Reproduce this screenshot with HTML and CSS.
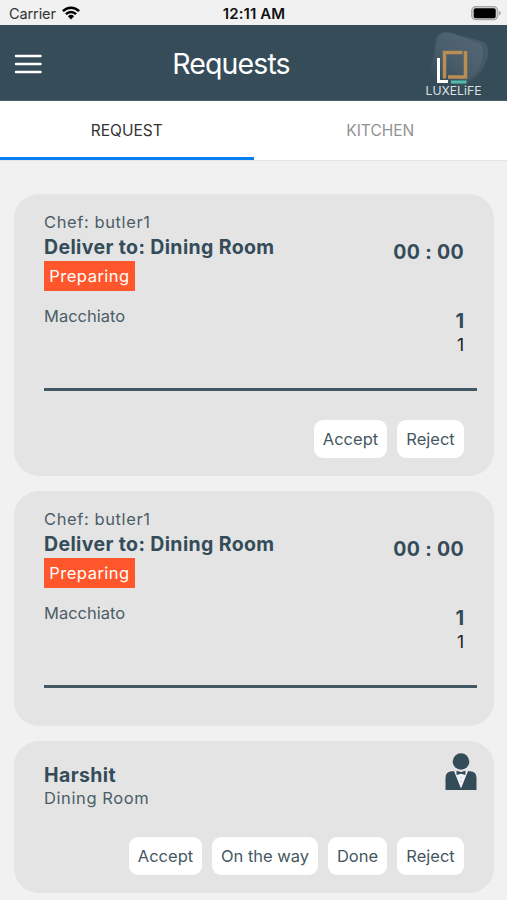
FILE: index.html
```html
<!DOCTYPE html>
<html lang="en">
<head>
<meta charset="utf-8">
<title>Requests</title>
<link rel="stylesheet" href="styles.css">
</head>
<body>
<div class="status">
  <div class="carrier"><span>Carrier</span>
    <svg width="18" height="14" viewBox="0 0 18 14"><g fill="none" stroke="#000" stroke-width="2.5"><path d="M.9 5.1C5.5.5 12.5.5 17.100 5.100"/><path d="M3.900 8.200C6.800 5.300 11.200 5.300 14.100 8.200"/></g><path d="M5.900 10.200Q9 7.500 12.100 10.200L9 13.500Z"/></svg>
  </div>
  <div class="clock">12:11 AM</div>
  <svg class="battery" width="30" height="15" viewBox="0 0 30 15"><rect x=".7" y=".7" width="26" height="13" rx="4" fill="#d4d4d4" stroke="#a5a5a5" stroke-width="1.200"/><rect x="2.700" y="2.200" width="22" height="10" rx="2"/><path d="M28 5v4.500Q29.800 8.800 29.800 7.200T28 5Z" fill="#a5a5a5"/></svg>
</div>
<header class="header">
  <svg class="menu" width="28" height="21" viewBox="0 0 28 21"><path d="M2 2h24.500M2 10h24.500M2 18h24.500" stroke="#fff" stroke-width="2.500" stroke-linecap="round"/></svg>
  <h1>Requests</h1>
  <svg class="logo" width="70" height="70" viewBox="0 0 70 70">
    <defs><linearGradient id="haze" x1="1" y1="0" x2=".2" y2="1"><stop offset="0" stop-color="#586b78"/><stop offset=".6" stop-color="#4b5f6c"/><stop offset="1" stop-color="#364c58"/></linearGradient></defs>
    <path d="M13 9Q17 1 28 4L58 12Q67 15 65 27L61 38Q54 50 39 57L8 49Q6 42 10 29Z" fill="url(#haze)" opacity=".55"/>
    <path d="M15 9Q18 2 28 4L55 14Q62 17 60 27L56 40Q48 50 36 57L12 49Q7 42 11 29Z" fill="url(#haze)" opacity=".8"/>
    <path d="M15.500 29v23.500H25" fill="none" stroke="#fff" stroke-width="3"/>
    <path d="M39.500 23.500H21.500v26M25 48H42.500V22" fill="none" stroke="#ba8d52" stroke-width="3.500"/>
    <path d="M28 53h15.500" stroke="#50bdb0" stroke-width="3"/>
    <text x="2.500" y="66" textLength="56" lengthAdjust="spacingAndGlyphs">LUXELiFE</text>
  </svg>
</header>
<nav class="tabs"><div class="tab active">REQUEST</div><div class="tab">KITCHEN</div></nav>
<main>
  <section class="card first">
    <div class="row">
      <div><p class="chef">Chef: butler1</p><p class="name deliver">Deliver to: Dining Room</p><span class="badge">Preparing</span></div>
      <div class="timer">00 : 00</div>
    </div>
    <div class="row item"><span class="drink">Macchiato</span><div class="counts"><b>1</b><span>1</span></div></div>
    <div class="rule"></div>
    <div class="actions"><button>Accept</button><button class="reject">Reject</button></div>
  </section>
  <section class="card second">
    <div class="row">
      <div><p class="chef">Chef: butler1</p><p class="name deliver">Deliver to: Dining Room</p><span class="badge">Preparing</span></div>
      <div class="timer">00 : 00</div>
    </div>
    <div class="row item"><span class="drink">Macchiato</span><div class="counts"><b>1</b><span>1</span></div></div>
    <div class="rule"></div>
  </section>
  <section class="card third">
    <div class="row guest">
      <div><p class="name">Harshit</p><p class="room">Dining Room</p></div>
      <svg class="butler" width="32" height="38" viewBox="0 0 32 38"><circle cx="16" cy="8.500" r="8.300" fill="#344c59"/><path d="M.5 37V25Q.5 18.500 7 18.300L10 18h12l3 .3Q31.500 18.500 31.500 25V37Z" fill="#344c59"/><path d="M9 18L16 35.500L23 18Z" fill="#f1f4f5"/><path d="M11.500 17.800L16 19L20.500 17.800V22L16 20.800L11.500 22Z" fill="#344c59"/><path d="M16 24v1M16 28v1" stroke="#9aa5ab"/></svg>
    </div>
    <div class="actions"><button>Accept</button><button class="way">On the way</button><button class="done">Done</button><button class="reject">Reject</button></div>
  </section>
</main>
</body>
</html>
```
FILE: styles.css
```css
* { box-sizing: border-box; }
body { margin: 0; height: 900px; overflow: hidden; background: #f1f1f1; color: #344c59; font-family: Inter, "Liberation Sans", sans-serif; }
p, h1 { margin: 0; }
.status { height: 25px; display: grid; grid-template-columns: 1fr auto 1fr; align-items: center; padding: 1px 6px 0 9px; color: #111; font-size: 15px; }
.carrier { display: flex; align-items: center; gap: 6px; color: #333; padding-top: 1px; }
.carrier span { font-size: 14.5px; letter-spacing: -.1px; }
.carrier svg { margin-top: -2px; }
.clock { font-weight: 600; padding-top: 1px; margin-right: 2px; letter-spacing: .1px; }
.battery { justify-self: end; }
.header { height: 76px; display: grid; grid-template-columns: 100px 1fr 100px; align-items: center; background: #364c58; border-bottom: 1px solid #4b606b; }
.menu { margin-left: 14px; margin-top: 3px; }
h1 { color: #fff; font-size: 28.5px; line-height: 36px; font-weight: 400; text-align: center; letter-spacing: -.9px; margin-right: 45px; padding-top: 2px; }
.logo { margin: 2px 0 0 16px; }
.logo text { font-size: 12px; fill: #dce1e4; }
.tabs { height: 60px; display: flex; background: #fff; border-bottom: 1px solid #e5e5e5; }
.tab { flex: 1; height: 59px; display: flex; align-items: center; justify-content: center; font-size: 15.5px; color: #929292; }
.active { color: #333; border-bottom: 3px solid #087ff5; padding-top: 3px; }
main { padding: 33px 13px 0 14px; }
.card { background: #e4e4e4; border-radius: 25px; margin-bottom: 15px; padding: 17px 30px 0; }
.first { height: 282px; }
.second { height: 235px; }
.third { height: 152px; padding-top: 13px; }
.row { display: flex; justify-content: space-between; }
.chef, .room, .drink { font-size: 16.5px; line-height: 22px; color: #4c5d67; }
.chef, .room { letter-spacing: .6px; }
.name { font-size: 19.5px; line-height: 28px; font-weight: 700; letter-spacing: .37px; }
.badge { display: block; width: 91px; height: 30px; background: #ff562b; color: #fff; font-size: 16.5px; line-height: 30px; text-align: center; letter-spacing: .5px; }
.timer { font-size: 19.5px; line-height: 28px; font-weight: 700; padding-top: 27px; letter-spacing: .35px; }
.item { margin-top: 14px; height: 68px; }
.counts { display: flex; flex-direction: column; align-items: flex-end; padding-top: 4px; line-height: 24px; }
.counts b { font-size: 20px; }
.counts span { font-size: 17.5px; color: #222; }
.rule { height: 3px; background: #425863; margin: 15px -13px 0 0; }
.actions { display: flex; justify-content: flex-end; gap: 10px; margin-top: 29px; }
button { width: 73px; height: 38px; border: 0; border-radius: 9px; padding: 0; background: #fff; color: #455862; font: 16.5px Inter, "Liberation Sans", sans-serif; }
.reject { width: 67px; }
.way { width: 106px; }
.done { width: 59px; }
.guest { height: 69px; }
.guest .name { padding-top: 9px; line-height: 24px; margin-bottom: 2px; }
.third .room { line-height: 18px; }
.butler { margin: -1px -13px 0 0; }
.third .actions { margin-top: 14px; }
```
